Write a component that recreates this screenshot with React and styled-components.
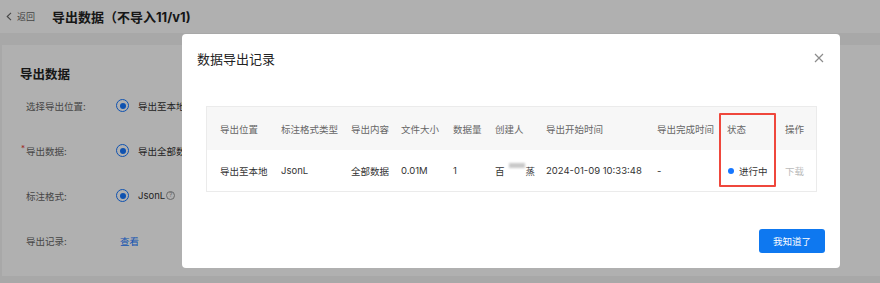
import React from "react";
import styled, { createGlobalStyle } from "styled-components";

const GlobalStyle = createGlobalStyle`
  html, body { margin: 0; padding: 0; }
  body {
    background: #f3f3f3;
    font-family: Inter, "Noto Sans CJK SC", sans-serif;
    color: #222;
    overflow: hidden;
  }
  * { box-sizing: border-box; }
`;

const Page = styled.div`
  width: 880px;
  height: 283px;
  display: flex;
  flex-direction: column;
`;

const Header = styled.header`
  height: 33px;
  background: #fff;
  display: flex;
  align-items: center;
  padding-left: 6px;
`;

const Back = styled.span`
  display: flex;
  align-items: center;
  gap: 5px;
  font-size: 9px;
  color: #666;
`;

const PageTitle = styled.h1`
  margin: 0 0 0 17px;
  font-size: 13px;
  font-weight: 700;
  color: #222;
`;

const Content = styled.main`
  flex: 1;
  padding: 12px 0 7px 2px;
  display: flex;
`;

const Card = styled.section`
  flex: 1;
  background: #fff;
  padding: 22px 0 0 18px;
`;

const CardTitle = styled.h2`
  margin: 0;
  font-size: 12.5px;
  line-height: 16px;
  font-weight: 700;
  color: #222;
`;

const FormRow = styled.div`
  display: grid;
  grid-template-columns: 90px auto;
  align-items: center;
  height: 45px;
  padding-left: 6px;
`;

const Label = styled.span`
  font-size: 9.5px;
  color: #666;
  position: relative;
`;

const Req = styled.span`
  position: absolute;
  left: -5px;
  top: -1px;
  color: #e53935;
  font-size: 8px;
`;

const Value = styled.span`
  display: flex;
  align-items: center;
  gap: 9px;
  font-size: 9.5px;
  color: #333;
`;

const Radio = styled.span`
  width: 13px;
  height: 13px;
  border-radius: 50%;
  border: 1.5px solid #1677ff;
  display: flex;
  align-items: center;
  justify-content: center;
  &::after {
    content: "";
    width: 6px;
    height: 6px;
    border-radius: 50%;
    background: #1677ff;
  }
`;

const JsonLabel = styled.span`
  display: flex;
  align-items: center;
`;

const Help = styled.span`
  display: inline-flex;
  align-items: center;
  justify-content: center;
  width: 9px;
  height: 9px;
  margin-left: 1px;
  border: 1px solid #999;
  border-radius: 50%;
  font-size: 6.5px;
  line-height: 1;
  color: #999;
`;

const Link = styled.span`
  color: #1677ff;
  font-size: 9.5px;
  margin-left: 4px;
`;

const Mask = styled.div`
  position: fixed;
  inset: 0;
  background: rgba(0, 0, 0, 0.31);
`;

const Modal = styled.div`
  position: fixed;
  left: 182px;
  top: 34px;
  width: 658px;
  height: 234px;
  background: #fff;
  border-radius: 4px;
  display: flex;
  flex-direction: column;
  padding: 16px 15px 15px 15px;
`;

const ModalHead = styled.div`
  display: flex;
  align-items: center;
  justify-content: space-between;
  height: 16px;
`;

const ModalTitle = styled.h3`
  margin: 0;
  font-size: 13px;
  font-weight: 400;
  color: #222;
`;

const Close = styled.span`
  display: flex;
  margin-right: 1px;
`;

const TableWrap = styled.div`
  position: relative;
  margin: 40px 8px 0 9px;
  border: 1px solid #ebebeb;
`;

const cols = "61px 70px 50px 52px 42px 51px 111px 70px 58px 1fr";

const HeadRow = styled.div`
  display: grid;
  grid-template-columns: ${cols};
  align-items: center;
  height: 43px;
  padding-left: 13px;
  background: #f7f7f7;
`;

const BodyRow = styled.div`
  display: grid;
  grid-template-columns: ${cols};
  align-items: center;
  height: 41px;
  padding-left: 13px;
  background: #fff;
`;

const Th = styled.span`
  font-size: 9.5px;
  color: #666;
  white-space: nowrap;
`;

const Td = styled.span`
  font-size: 9.5px;
  color: ${(p) => (p.$muted ? "#bbb" : "#333")};
  white-space: nowrap;
  display: flex;
  align-items: center;
`;

const Blur = styled.span`
  display: inline-block;
  width: 16px;
  height: 5px;
  margin: 0 1px 0 4px;
  background: #c9c9c9;
  filter: blur(0.8px);
  align-self: flex-start;
  margin-top: -1px;
`;

const Dot = styled.span`
  width: 6px;
  height: 6px;
  border-radius: 50%;
  background: #1677ff;
  margin: 0 5px 0 1px;
`;

const Highlight = styled.div`
  position: absolute;
  left: 512px;
  top: 6px;
  width: 57px;
  height: 74px;
  border: 2px solid #ef473c;
  border-radius: 1px;
  pointer-events: none;
`;

const Footer = styled.div`
  margin-top: auto;
  display: flex;
  justify-content: flex-end;
`;

const Button = styled.button`
  width: 66px;
  height: 24px;
  border: none;
  border-radius: 3px;
  background: #0e78f0;
  color: #fff;
  font-family: inherit;
  font-size: 9.5px;
  padding: 0;
`;

const headers = [
  "导出位置",
  "标注格式类型",
  "导出内容",
  "文件大小",
  "数据量",
  "创建人",
  "导出开始时间",
  "导出完成时间",
  "状态",
  "操作",
];

export default function App() {
  return (
    <>
      <GlobalStyle />
      <Page>
        <Header>
          <Back>
            <svg width="6" height="9" viewBox="0 0 6 9">
              <path d="M5 0.8 L1.2 4.5 L5 8.2" fill="none" stroke="#666" strokeWidth="1.1" />
            </svg>
            返回
          </Back>
          <PageTitle>导出数据（不导入11/v1)</PageTitle>
        </Header>
        <Content>
          <Card>
            <CardTitle>导出数据</CardTitle>
            <FormRow>
              <Label>选择导出位置:</Label>
              <Value>
                <Radio />
                导出至本地
              </Value>
            </FormRow>
            <FormRow>
              <Label>
                <Req>*</Req>导出数据:
              </Label>
              <Value>
                <Radio />
                导出全部数据
              </Value>
            </FormRow>
            <FormRow>
              <Label>标注格式:</Label>
              <Value>
                <Radio />
                <JsonLabel>
                  JsonL<Help>?</Help>
                </JsonLabel>
              </Value>
            </FormRow>
            <FormRow>
              <Label>导出记录:</Label>
              <Value>
                <Link>查看</Link>
              </Value>
            </FormRow>
          </Card>
        </Content>
      </Page>
      <Mask />
      <Modal>
        <ModalHead>
          <ModalTitle>数据导出记录</ModalTitle>
          <Close>
            <svg width="10" height="10" viewBox="0 0 10 10">
              <path d="M1 1 L9 9 M9 1 L1 9" stroke="#8c8c8c" strokeWidth="1.2" />
            </svg>
          </Close>
        </ModalHead>
        <TableWrap>
          <HeadRow>
            {headers.map((h) => (
              <Th key={h}>{h}</Th>
            ))}
          </HeadRow>
          <BodyRow>
            <Td>导出至本地</Td>
            <Td>JsonL</Td>
            <Td>全部数据</Td>
            <Td>0.01M</Td>
            <Td>1</Td>
            <Td>
              百<Blur />蒸
            </Td>
            <Td>2024-01-09 10:33:48</Td>
            <Td>-</Td>
            <Td>
              <Dot />
              进行中
            </Td>
            <Td $muted>下载</Td>
          </BodyRow>
          <Highlight />
        </TableWrap>
        <Footer>
          <Button>我知道了</Button>
        </Footer>
      </Modal>
    </>
  );
}
